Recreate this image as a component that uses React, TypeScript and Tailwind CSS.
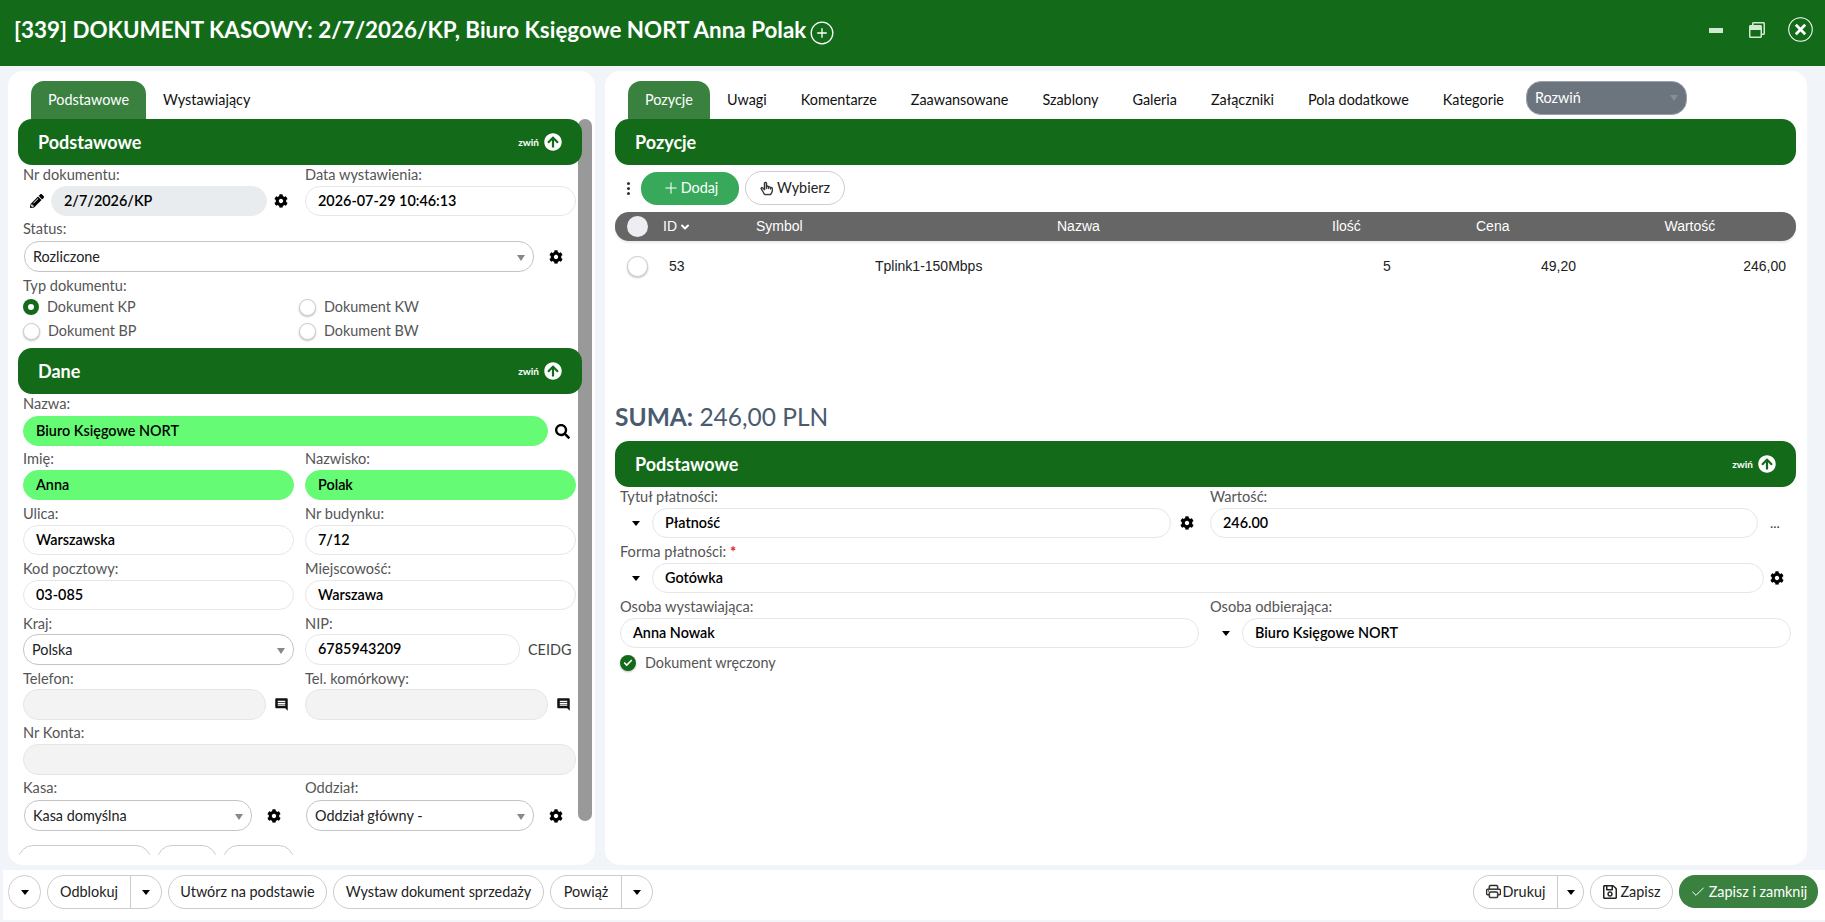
import React from 'react';
import { FaCog, FaPencilAlt, FaSearch, FaArrowCircleUp, FaRegSave, FaRegWindowRestore } from 'react-icons/fa';
import { MdMessage } from 'react-icons/md';
import { BsPrinter, BsHandIndexThumb } from 'react-icons/bs';
import { Plus, CirclePlus, Check, ChevronDown } from 'lucide-react';

const GREEN = 'bg-[#136b1a]';

const Label = ({ children }: { children: React.ReactNode }) => (
  <div className="h-[20px] leading-[20px] text-[14.6px] text-[#555] whitespace-nowrap">{children}</div>
);

const Input = ({ value, className = '' }: { value?: string; className?: string }) => (
  <div className={`h-[30px] min-w-0 rounded-[15px] border border-[#e6e6e6] px-[12px] leading-[28px] text-[14.4px] font-semibold text-black whitespace-nowrap overflow-hidden ${className}`}>
    {value}
  </div>
);

const Select = ({ value, className = '' }: { value: string; className?: string }) => (
  <div className={`h-[31px] min-w-0 rounded-[15px] border border-[#c4c4c4] pl-[8px] pr-[8px] flex items-center justify-between text-[14.4px] text-[#222] ${className}`}>
    <span>{value}</span>
    <span className="w-0 h-0 border-x-[4px] border-x-transparent border-t-[6px] border-t-[#888] mt-[2px]" />
  </div>
);

const Gear = ({ className = '' }: { className?: string }) => <FaCog className={`w-[14px] h-[14px] shrink-0 text-black ${className}`} />;

const Caret = ({ className = '' }: { className?: string }) => (
  <span className={`inline-block w-0 h-0 shrink-0 border-x-[4px] border-x-transparent border-t-[5px] border-t-black ${className}`} />
);

const Radio = ({ checked, label }: { checked?: boolean; label: string }) => (
  <div className="flex items-center gap-[8px] h-[24px] text-[14.4px] text-[#555]">
    {checked ? (
      <span className="w-[16px] h-[16px] rounded-full bg-[#136b1a] flex items-center justify-center">
        <span className="w-[6px] h-[6px] rounded-full bg-white" />
      </span>
    ) : (
      <span className="w-[17px] h-[17px] rounded-full bg-white border border-[#ccc] shadow-[0_1px_2px_rgba(0,0,0,0.25)]" />
    )}
    <span>{label}</span>
  </div>
);

const SectionHead = ({ title, toggle = true, className = '' }: { title: string; toggle?: boolean; className?: string }) => (
  <div className={`${GREEN} h-[46px] rounded-[14px] pl-[20px] pr-[20px] flex items-center justify-between shrink-0 text-white ${className}`}>
    <span className="text-[18px] font-bold">{title}</span>
    {toggle && (
      <span className="flex items-center gap-[5px]">
        <span className="text-[10px] font-bold">zwiń</span>
        <FaArrowCircleUp className="w-[18px] h-[18px]" />
      </span>
    )}
  </div>
);

const Tab = ({ label, active }: { label: string; active?: boolean }) =>
  active ? (
    <div className="h-[38px] px-[17px] rounded-t-[13px] bg-[#3a813f] text-white flex items-center text-[14.4px]">{label}</div>
  ) : (
    <div className="h-[38px] px-[17px] flex items-center text-[14.4px] text-[#111] whitespace-nowrap">{label}</div>
  );

const OutlineBtn = ({ children, className = '' }: { children: React.ReactNode; className?: string }) => (
  <div className={`h-[34px] rounded-[17px] border border-[#ccc] bg-white flex items-center justify-center text-[14.4px] text-[#222] whitespace-nowrap ${className}`}>
    {children}
  </div>
);

const LeftCol = () => (
  <div className="w-[587px] shrink-0 rounded-[15px] bg-white pt-[10px] pl-[10px] pr-[3px] flex flex-col overflow-hidden">
    <div className="flex pl-[13px] shrink-0">
      <Tab label="Podstawowe" active />
      <Tab label="Wystawiający" />
    </div>
    <div className="relative h-[736px] overflow-hidden">
      <div className="absolute right-0 top-0 w-[14px] h-[702px] rounded-[7px] bg-[#999]" />
      <div className="relative flex flex-col">
        <SectionHead title="Podstawowe" className="mr-[10px]" />
        <div className="pl-[5px] pr-[16px]">
          <div className="grid grid-cols-[274px_1fr] gap-x-[8px]">
            <div>
              <Label>Nr dokumentu:</Label>
              <div className="flex items-center mt-[1px]">
                <FaPencilAlt className="w-[14px] h-[14px] mx-[7px] text-black" />
                <Input value="2/7/2026/KP" className="flex-1 bg-[#e9ecef] !border-[#e9ecef]" />
                <Gear className="ml-[7px] mr-[9px]" />
              </div>
            </div>
            <div>
              <Label>Data wystawienia:</Label>
              <Input value="2026-07-29 10:46:13" className="mt-[1px]" />
            </div>
          </div>
          <div className="mt-[3px]">
            <Label>Status:</Label>
            <div className="flex items-center mt-[2px]">
              <Select value="Rozliczone" className="w-[510px] ml-[1px]" />
              <Gear className="ml-[15px]" />
            </div>
          </div>
          <div className="mt-[4px]">
            <Label>Typ dokumentu:</Label>
            <div className="grid grid-cols-[276px_1fr] -mt-[1px]">
              <Radio checked label="Dokument KP" />
              <Radio label="Dokument KW" />
              <Radio label="Dokument BP" />
              <Radio label="Dokument BW" />
            </div>
          </div>
        </div>
        <SectionHead title="Dane" className="mt-[5px] mr-[10px]" />
        <div className="pl-[5px] pr-[16px]">
          <div>
            <Label>Nazwa:</Label>
            <div className="flex items-center mt-[2px]">
              <Input value="Biuro Księgowe NORT" className="w-[525px] bg-[#66fb74] !border-[#66fb74]" />
              <FaSearch className="ml-[7px] w-[15px] h-[15px] text-black" />
            </div>
          </div>
          <div className="grid grid-cols-[271px_1fr] gap-x-[11px] gap-y-[4px] mt-[3px]">
            <div><Label>Imię:</Label><Input value="Anna" className="mt-[1px] bg-[#66fb74] !border-[#66fb74]" /></div>
            <div><Label>Nazwisko:</Label><Input value="Polak" className="mt-[1px] bg-[#66fb74] !border-[#66fb74]" /></div>
            <div><Label>Ulica:</Label><Input value="Warszawska" className="mt-[1px]" /></div>
            <div><Label>Nr budynku:</Label><Input value="7/12" className="mt-[1px]" /></div>
            <div><Label>Kod pocztowy:</Label><Input value="03-085" className="mt-[1px]" /></div>
            <div><Label>Miejscowość:</Label><Input value="Warszawa" className="mt-[1px]" /></div>
            <div><Label>Kraj:</Label><Select value="Polska" /></div>
            <div>
              <Label>NIP:</Label>
              <div className="flex items-center">
                <Input value="6785943209" className="w-[215px] h-[31px]" />
                <span className="ml-[8px] text-[14.4px] text-[#444]">CEIDG</span>
              </div>
            </div>
            <div>
              <Label>Telefon:</Label>
              <div className="flex items-center">
                <Input className="w-[243px] h-[31px] bg-[#f3f3f4]" />
                <MdMessage className="ml-[8px] w-[15px] h-[15px] text-[#111] -scale-x-100" />
              </div>
            </div>
            <div>
              <Label>Tel. komórkowy:</Label>
              <div className="flex items-center">
                <Input className="w-[243px] h-[31px] bg-[#f3f3f4]" />
                <MdMessage className="ml-[8px] w-[15px] h-[15px] text-[#111] -scale-x-100" />
              </div>
            </div>
          </div>
          <div className="mt-[3px]">
            <Label>Nr Konta:</Label>
            <Input className="mt-[1px] h-[31px] bg-[#f3f3f4]" />
          </div>
          <div className="grid grid-cols-[271px_1fr] gap-x-[11px] mt-[3px]">
            <div>
              <Label>Kasa:</Label>
              <div className="flex items-center mt-[2px] pl-[1px]">
                <Select value="Kasa domyślna" className="w-[228px]" />
                <Gear className="ml-[15px]" />
              </div>
            </div>
            <div>
              <Label>Oddział:</Label>
              <div className="flex items-center mt-[2px] pl-[1px]">
                <Select value="Oddział główny -" className="w-[228px]" />
                <Gear className="ml-[15px]" />
              </div>
            </div>
          </div>
        </div>
        <div className="flex gap-[6px] mt-[14px]">
          <div className="h-[34px] w-[133px] rounded-[15px] border border-[#ccc]" />
          <div className="h-[34px] w-[60px] rounded-[15px] border border-[#ccc]" />
          <div className="h-[34px] w-[71px] rounded-[15px] border border-[#ccc]" />
        </div>
      </div>
    </div>
  </div>
);

const TABLE_COLS = 'grid grid-cols-[48px_93px_301px_275px_144px_1fr] items-center';

const RightCol = () => (
  <div className="flex-1 rounded-[15px] bg-white pt-[10px] pl-[10px] pr-[11px] flex flex-col overflow-hidden">
    <div className="flex pl-[13px] items-start shrink-0">
      <Tab label="Pozycje" active />
      <Tab label="Uwagi" />
      <Tab label="Komentarze" />
      <Tab label="Zaawansowane" />
      <Tab label="Szablony" />
      <Tab label="Galeria" />
      <Tab label="Załączniki" />
      <Tab label="Pola dodatkowe" />
      <Tab label="Kategorie" />
      <div className="ml-[5px] w-[161px] h-[34px] rounded-[15px] bg-[#6c757d] border border-[#9aa0b0] text-white text-[14.4px] pl-[8px] pr-[8px] flex items-center justify-between">
        <span>Rozwiń</span>
        <span className="w-0 h-0 border-x-[4px] border-x-transparent border-t-[6px] border-t-[#868e96]" />
      </div>
    </div>
    <SectionHead title="Pozycje" toggle={false} />
    <div className="flex items-center mt-[6px] h-[34px]">
      <span className="w-[26px] flex flex-col items-center gap-[2px]">
        <span className="w-[3px] h-[3px] rounded-full bg-[#333]" />
        <span className="w-[3px] h-[3px] rounded-full bg-[#333]" />
        <span className="w-[3px] h-[3px] rounded-full bg-[#333]" />
      </span>
      <div className="w-[98px] h-[33px] rounded-[16px] bg-[#38a85a] text-white text-[14.4px] flex items-center justify-center gap-[1px]">
        <Plus className="w-[18px] h-[18px]" strokeWidth={1.4} />
        Dodaj
      </div>
      <OutlineBtn className="w-[100px] ml-[6px] gap-[4px]">
        <BsHandIndexThumb className="w-[13px] h-[15px] stroke-[0.6px]" />
        Wybierz
      </OutlineBtn>
    </div>
    <div className={`${TABLE_COLS} mt-[7px] h-[29px] rounded-[14px] bg-[#666] text-white text-[14px] font-['Liberation_Sans',sans-serif] shadow-[0_2px_2px_rgba(0,0,0,0.08)]`}>
      <span className="ml-[12px] w-[21px] h-[21px] rounded-full bg-[#eeeef2]" />
      <span className="flex items-center gap-[2px]">ID<ChevronDown className="w-[12px] h-[12px]" strokeWidth={4} /></span>
      <span>Symbol</span>
      <span>Nazwa</span>
      <span>Ilość</span>
      <span className="flex">Cena<span className="ml-[155px]">Wartość</span></span>
    </div>
    <div className="h-[50px] text-[14px] text-[#222] font-['Liberation_Sans',sans-serif] flex items-center">
      <span className="ml-[12px] w-[21px] h-[21px] rounded-full bg-white border border-[#ccc] shadow-[0_1px_2px_rgba(0,0,0,0.25)]" />
      <span className="ml-[21px] w-[206px]">53</span>
      <span className="w-[508px]">Tplink1-150Mbps</span>
      <span className="w-[7px]">5</span>
      <span className="w-[186px] text-right">49,20</span>
      <span className="w-[210px] text-right">246,00</span>
    </div>
    <div className="mt-[112px] h-[28px] leading-[28px] text-[24.5px] text-[#4a5b70]"><b className="font-bold">SUMA:</b> 246,00 PLN</div>
    <SectionHead title="Podstawowe" className="mt-[10px]" />
    <div className="pl-[5px] pr-[3px]">
      <div className="grid grid-cols-[590px_1fr] gap-x-0">
        <div>
          <Label>Tytuł płatności:</Label>
          <div className="flex items-center mt-[1px]">
            <Caret className="ml-[12px]" />
            <Input value="Płatność" className="ml-[12px] w-[519px]" />
            <Gear className="ml-[9px]" />
          </div>
        </div>
        <div>
          <Label>Wartość:</Label>
          <div className="flex items-center mt-[1px]">
            <Input value="246.00" className="w-[548px]" />
            <span className="ml-[12px] text-[14px] text-[#444] leading-none">...</span>
          </div>
        </div>
      </div>
      <div className="mt-[4px]">
        <Label>Forma płatności: <span className="text-[#e02020] font-bold">*</span></Label>
        <div className="flex items-center mt-[1px]">
          <Caret className="ml-[12px]" />
          <Input value="Gotówka" className="ml-[12px] w-[1112px]" />
          <Gear className="ml-[6px]" />
        </div>
      </div>
      <div className="grid grid-cols-[590px_1fr] mt-[4px]">
        <div>
          <Label>Osoba wystawiająca:</Label>
          <Input value="Anna Nowak" className="mt-[1px] w-[579px]" />
        </div>
        <div>
          <Label>Osoba odbierająca:</Label>
          <div className="flex items-center mt-[1px]">
            <Caret className="ml-[12px]" />
            <Input value="Biuro Księgowe NORT" className="ml-[12px] w-[549px]" />
          </div>
        </div>
      </div>
      <div className="flex items-center gap-[9px] mt-[4px] text-[14.4px] text-[#555]">
        <span className="w-[16px] h-[16px] rounded-full bg-[#136b1a] flex items-center justify-center shadow-[0_1px_2px_rgba(0,0,0,0.25)]">
          <Check className="w-[10px] h-[10px] text-white" strokeWidth={4} />
        </span>
        Dokument wręczony
      </div>
    </div>
  </div>
);

export default function App() {
  return (
    <div className="w-[1825px] h-[922px] bg-[#f1f5f9] flex flex-col overflow-hidden font-['Lato','Noto_Sans',sans-serif]">
      <header className={`${GREEN} h-[66px] shrink-0 flex items-center pl-[14px] pr-[12px] text-white`}>
        <h1 className="text-[22.4px] font-bold whitespace-nowrap mb-[6px]">[339] DOKUMENT KASOWY: 2/7/2026/KP, Biuro Księgowe NORT Anna Polak</h1>
        <CirclePlus className="ml-[3px] w-[26px] h-[26px]" strokeWidth={1.2} />
        <div className="ml-auto flex items-center gap-[26px] mb-[7px] text-[#cfeacf]">
          <span className="w-[14px] h-[5px] bg-[#cfeacf] mt-[1px]" />
          <FaRegWindowRestore className="w-[16px] h-[16px] mt-[1px]" />
          <svg viewBox="0 0 24 24" className="w-[25px] h-[25px] -ml-[3px] text-white" fill="none" stroke="currentColor">
            <circle cx="12" cy="12" r="11.3" strokeWidth="1" />
            <path d="M7.5 7.5l9 9M16.5 7.5l-9 9" strokeWidth="2.6" />
          </svg>
        </div>
      </header>
      <main className="flex gap-[10px] pl-[8px] pr-[18px] pt-[5px] h-[799px] shrink-0">
        <LeftCol />
        <RightCol />
      </main>
      <footer className="mt-[5px] ml-[3px] h-[50px] bg-white flex items-start pt-[5px] pl-[5px] pr-[7px] gap-[6px]">
        <OutlineBtn className="w-[33px]"><Caret /></OutlineBtn>
        <OutlineBtn className="w-[115px] !justify-start">
          <span className="w-[82px] text-center">Odblokuj</span>
          <span className="h-full w-px bg-[#ccc]" />
          <span className="flex-1 flex justify-center"><Caret /></span>
        </OutlineBtn>
        <OutlineBtn className="w-[159px]">Utwórz na podstawie</OutlineBtn>
        <OutlineBtn className="w-[211px]">Wystaw dokument sprzedaży</OutlineBtn>
        <OutlineBtn className="w-[103px] !justify-start">
          <span className="w-[70px] text-center">Powiąż</span>
          <span className="h-full w-px bg-[#ccc]" />
          <span className="flex-1 flex justify-center"><Caret /></span>
        </OutlineBtn>
        <OutlineBtn className="ml-auto w-[111px] !justify-start">
          <span className="w-[83px] flex items-center justify-center gap-[2px]"><BsPrinter className="w-[15px] h-[15px] stroke-[0.5px]" />Drukuj</span>
          <span className="h-full w-px bg-[#ccc]" />
          <span className="flex-1 flex justify-center"><Caret /></span>
        </OutlineBtn>
        <OutlineBtn className="w-[83px] gap-[2px]"><FaRegSave className="w-[16px] h-[16px]" />Zapisz</OutlineBtn>
        <div className="w-[139px] h-[33px] rounded-[16px] bg-[#3a813f] text-white text-[14.4px] flex items-center justify-center gap-[3px]">
          <Check className="w-[16px] h-[16px]" strokeWidth={1.5} />
          Zapisz i zamknij
        </div>
      </footer>
    </div>
  );
}
